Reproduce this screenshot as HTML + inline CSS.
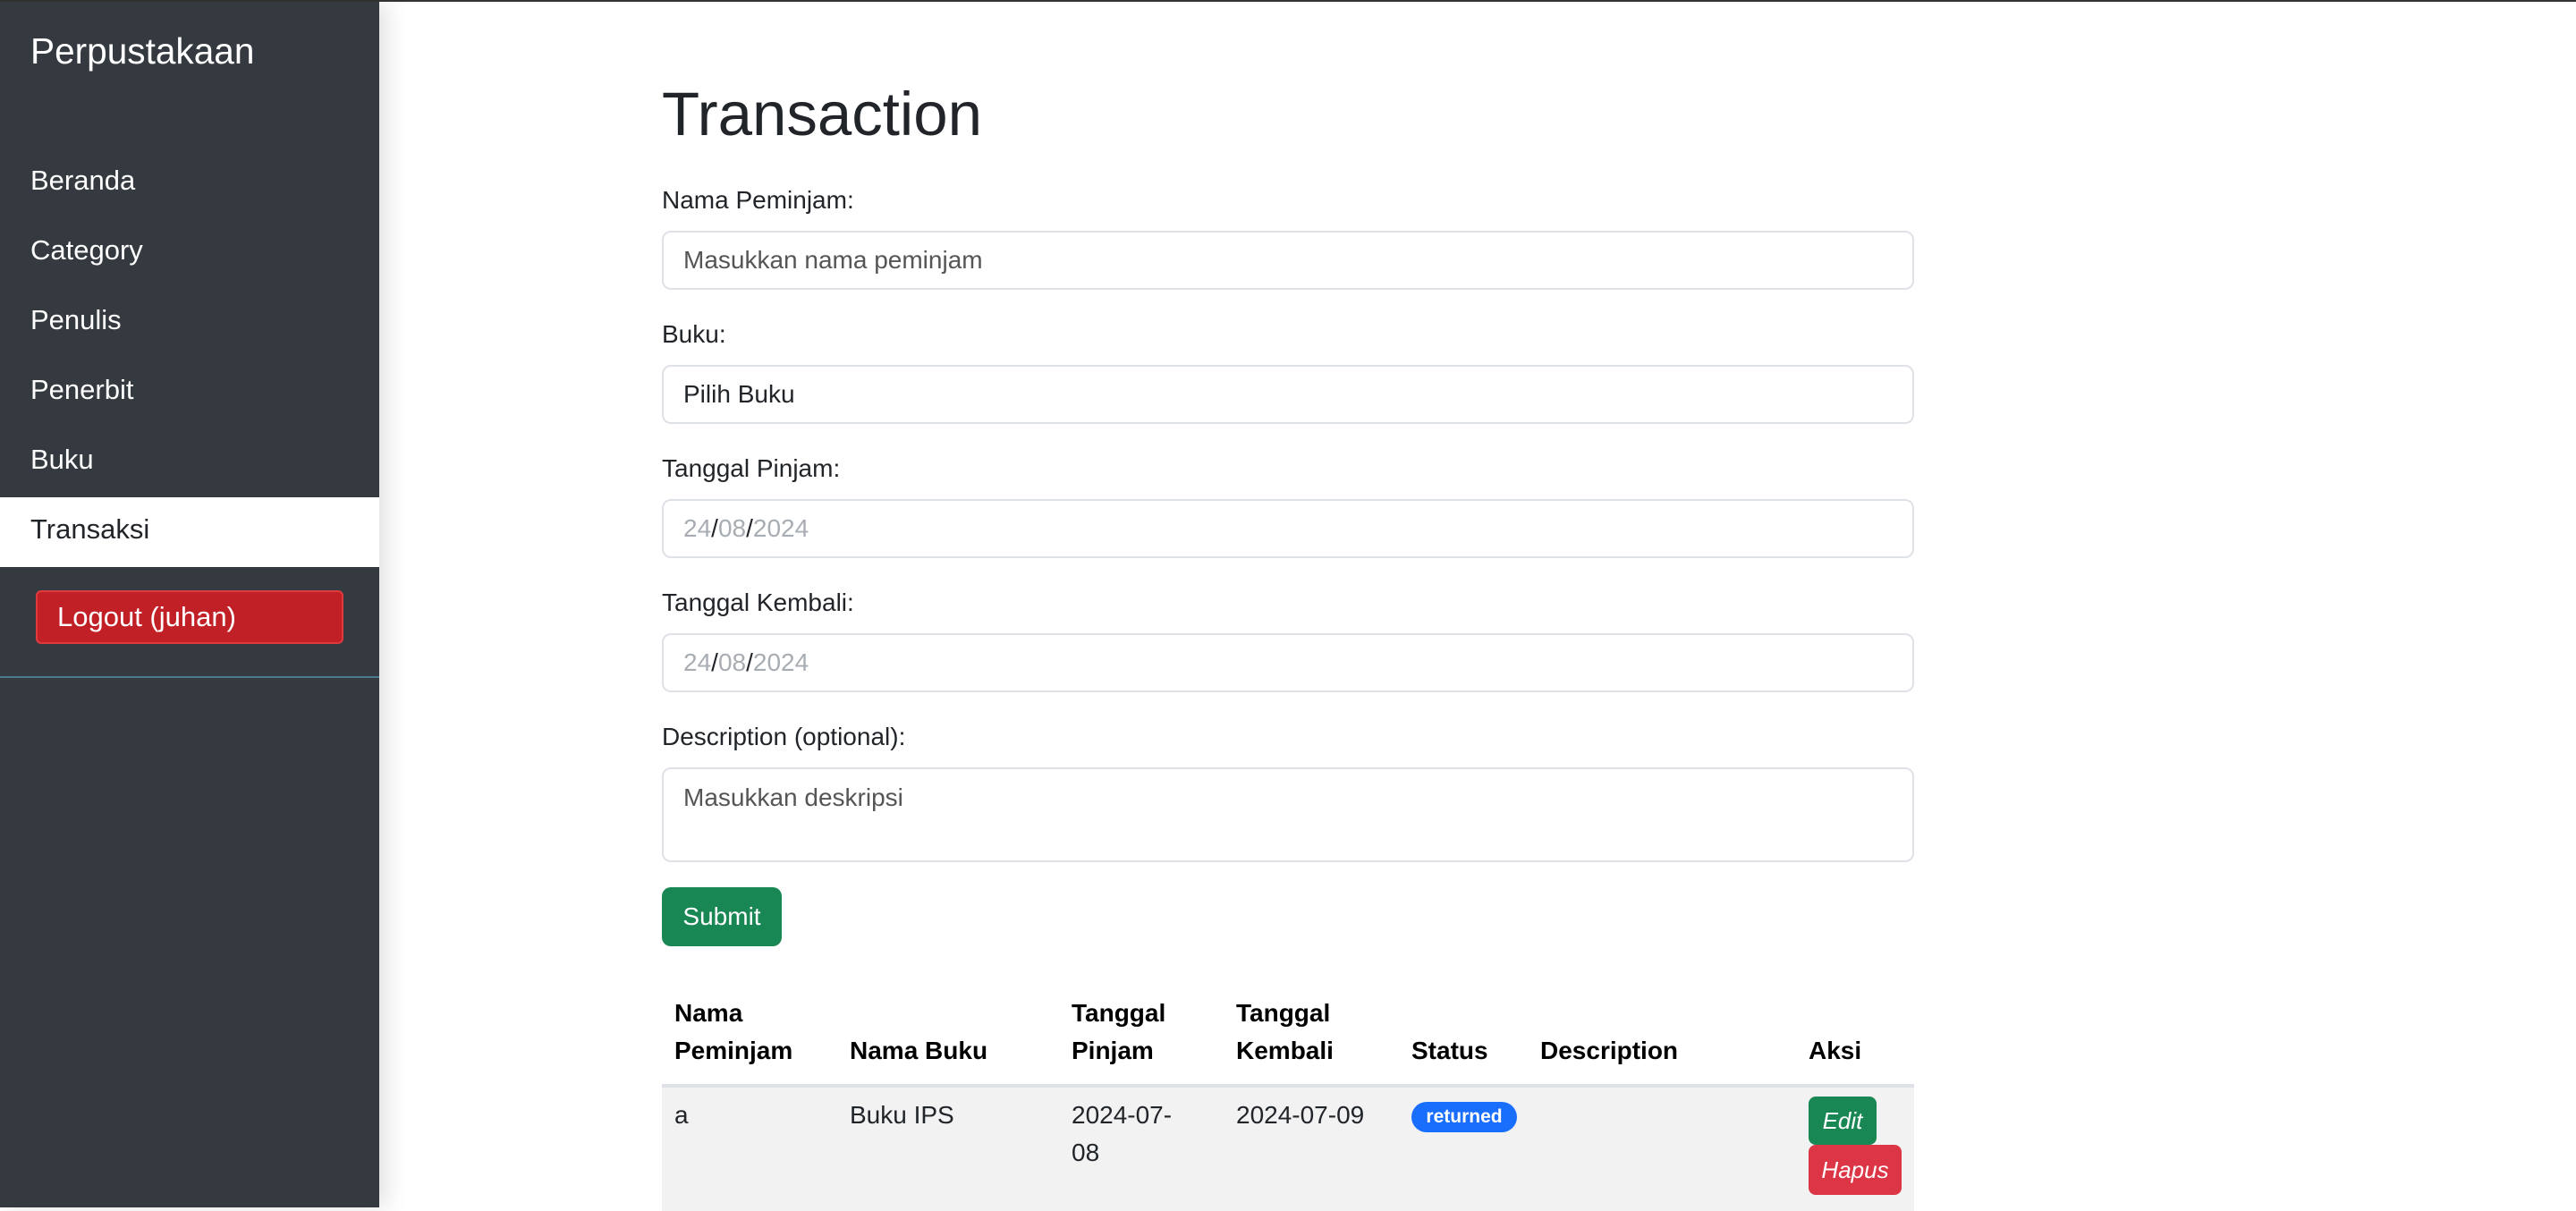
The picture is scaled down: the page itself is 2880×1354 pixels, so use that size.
<!DOCTYPE html>
<html><head><meta charset="utf-8"><style>
html,body{margin:0;padding:0}
body{zoom:2;width:1440px;height:675px;overflow:hidden;background:#fff;font-family:"Liberation Sans",sans-serif;color:#212529;position:relative;font-size:15px}
.a{position:absolute}
#top{left:0;top:0;width:1440px;height:1px;background:#333}
#side{left:0;top:1px;width:212px;height:674px;background:#343a40;box-shadow:4px 0 12px rgba(0,0,0,.12)}
.brand{left:17px;top:16px;color:#fff;font-size:20.3px}
.nav{left:17px;color:#fff;font-size:15.5px}
#act{left:0;top:277px;width:212px;height:39px;background:#fff}
#logout{left:20px;top:329px;width:172px;height:30px;background:#c12126;border:1px solid #e03a3e;border-radius:3px;color:#fff;font-size:15.5px;line-height:28px;box-sizing:border-box;padding-left:11px}
#hr{left:0;top:377px;width:212px;height:1px;background:#4a7b8c}
h1{position:absolute;left:370px;top:44px;margin:0;font-size:34.5px;font-weight:500}
.lbl{left:370px;font-size:14px}
.inp{left:370px;width:700px;height:33px;border:1px solid #dee2e6;border-radius:5px;box-sizing:border-box;padding-left:11px;line-height:31px;font-size:14px;color:#555}
.d{color:#a8adb3}.d b{font-weight:normal;color:#212529}
#sub{left:370px;top:496px;width:67px;height:33px;background:#198754;border-radius:5px;color:#fff;font-size:14px;text-align:center;line-height:33px}
th,td{position:absolute;font-size:14px;line-height:21px;text-align:left;padding:0}
th{font-weight:bold;color:#000}
#row{left:370px;top:606px;width:700px;height:69px;background:#f2f2f2;border-top:2px solid #dee2e6}
</style></head><body>
<div class="a" id="top"></div>
<div class="a" id="side">
<div class="a brand">Perpustakaan</div>
<div class="a nav" style="top:91px">Beranda</div>
<div class="a nav" style="top:130px">Category</div>
<div class="a nav" style="top:169px">Penulis</div>
<div class="a nav" style="top:208px">Penerbit</div>
<div class="a nav" style="top:247px">Buku</div>
<div class="a" id="act"></div>
<div class="a nav" style="top:286px;color:#212529">Transaksi</div>
<div class="a" id="logout">Logout (juhan)</div>
<div class="a" id="hr"></div>
</div>
<h1>Transaction</h1>
<div class="a lbl" style="top:104px">Nama Peminjam:</div>
<div class="a inp" style="top:129px">Masukkan nama peminjam</div>
<div class="a lbl" style="top:179px">Buku:</div>
<div class="a inp" style="top:204px;color:#212529">Pilih Buku</div>
<div class="a lbl" style="top:254px">Tanggal Pinjam:</div>
<div class="a inp d" style="top:279px">24<b>/</b>08<b>/</b>2024</div>
<div class="a lbl" style="top:329px">Tanggal Kembali:</div>
<div class="a inp d" style="top:354px">24<b>/</b>08<b>/</b>2024</div>
<div class="a lbl" style="top:404px">Description (optional):</div>
<div class="a inp" style="top:429px;height:53px;line-height:20px;padding-top:6px">Masukkan deskripsi</div>
<div class="a" id="sub">Submit</div>
<div class="a" id="row"></div>
<table><tr>
<th style="left:377px;top:556px">Nama<br>Peminjam</th>
<th style="left:475px;top:577px">Nama Buku</th>
<th style="left:599px;top:556px">Tanggal<br>Pinjam</th>
<th style="left:691px;top:556px">Tanggal<br>Kembali</th>
<th style="left:789px;top:577px">Status</th>
<th style="left:861px;top:577px">Description</th>
<th style="left:1011px;top:577px">Aksi</th>
</tr><tr>
<td style="left:377px;top:613px">a</td>
<td style="left:475px;top:613px">Buku IPS</td>
<td style="left:599px;top:613px">2024-07-<br>08</td>
<td style="left:691px;top:613px">2024-07-09</td>
</tr></table>
<div class="a" style="left:789px;top:616px;width:59px;height:17px;background:#1a6efd;border-radius:9px;color:#fff;font-size:10.5px;font-weight:bold;text-align:center;line-height:17px">returned</div>
<div class="a" style="left:1011px;top:613px;width:38px;height:27px;background:#198754;border-radius:4px;color:#fff;font-size:13px;font-style:italic;text-align:center;line-height:27px">Edit</div>
<div class="a" style="left:1011px;top:640px;width:52px;height:28px;background:#dc3545;border-radius:4px;color:#fff;font-size:13px;font-style:italic;text-align:center;line-height:28px">Hapus</div>
</body></html>
